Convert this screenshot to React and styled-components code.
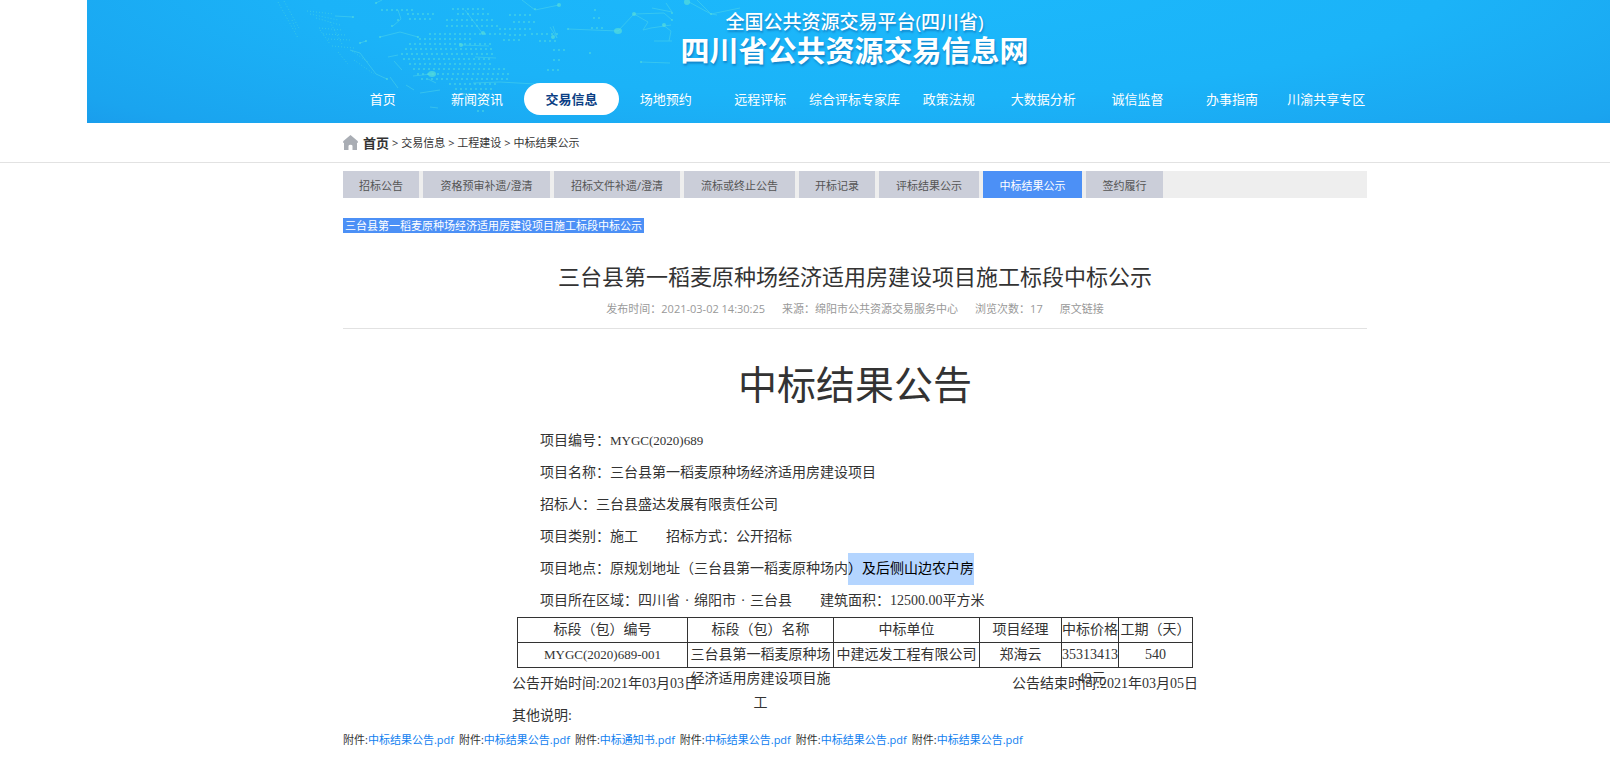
import styled, { createGlobalStyle } from "styled-components";

const menus = [
    "首页",
    "新闻资讯",
    "交易信息",
    "场地预约",
    "远程评标",
    "综合评标专家库",
    "政策法规",
    "大数据分析",
    "诚信监督",
    "办事指南",
    "川渝共享专区"
];

const tabs = [
    { name: "招标公告", width: 76 },
    { name: "资格预审补遗/澄清", width: 127 },
    { name: "招标文件补遗/澄清", width: 126 },
    { name: "流标或终止公告", width: 111 },
    { name: "开标记录", width: 76 },
    { name: "评标结果公示", width: 100 },
    { name: "中标结果公示", width: 99 },
    { name: "签约履行", width: 77 }
];

const columns = [
    { name: "标段（包）编号", width: 170, value: "MYGC(2020)689-001", code: true },
    { name: "标段（包）名称", width: 146, value: "三台县第一稻麦原种场经济适用房建设项目施工" },
    { name: "中标单位", width: 146, value: "中建远发工程有限公司" },
    { name: "项目经理", width: 82, value: "郑海云" },
    { name: "中标价格", width: 57, value: "35313413\n.49元" },
    { name: "工期（天）", width: 74, value: "540" }
];

const files = [
    "中标结果公告.pdf",
    "中标结果公告.pdf",
    "中标通知书.pdf",
    "中标结果公告.pdf",
    "中标结果公告.pdf",
    "中标结果公告.pdf"
];

// [y, first x, last x] of each row of dots on the globe
const dotRows = [
    [10, 112, 145], [14, 138, 165], [9, 183, 215], [14, 188, 220], [19, 140, 164], [20, 177, 225],
    [26, 177, 230], [29, 230, 262], [34, 160, 240], [39, 150, 205], [44, 140, 225], [49, 136, 222],
    [54, 132, 226], [59, 134, 224], [64, 140, 224], [69, 144, 236], [74, 148, 240], [79, 152, 238],
    [84, 180, 230], [89, 186, 226], [94, 194, 222], [99, 198, 220], [104, 200, 218], [111, 208, 216],
    [15, 240, 262], [22, 244, 268], [35, 240, 256], [40, 234, 252], [10, 325, 330], [18, 324, 332],
    [28, 322, 335], [34, 262, 290], [41, 270, 288], [50, 284, 296], [60, 284, 294], [70, 278, 292]
]

const lines = [
    "M65 16L83 17", "M123 26L131 19L128 10", "M110 37L130 32L148 37", "M195 10L213 34", "M106 3L112 0",
    "M191 45L219 46", "M118 57L128 55", "M124 61L132 70", "M143 76L162 74", "M252 0L265 10L289 5",
    "M298 29L348 31L364 14L394 13L402 20", "M364 14L378 22L373 30L381 28L401 25",
    "M393 25L401 31L399 41", "M384 41L402 41", "M371 62L400 63", "M419 2L441 14L470 8", "M427 0L441 14L447 15",
    "M280 27L287 38L283 26", "M382 8L402 12L396 3", "M90 43L96 41", "M80 50L90 53L106 74L117 79",
    "M203 83L230 82L265 84", "M150 93L170 90", "M120 77L128 88", "M205 57L226 58", "M160 107L168 108",
    "M136 85L144 90", "M158 79L166 83"
];

const nodes = [
    [83, 17, 1], [128, 20, 1], [110, 37, 1], [148, 37, 1], [213, 33, 2], [191, 45, 2], [162, 74, 4],
    [289, 5, 2], [265, 9, 1], [298, 29, 1], [348, 31, 4], [364, 14, 2], [394, 25, 2], [402, 20, 1],
    [417, 2, 3], [441, 14, 1], [320, 53, 1], [96, 41, 1], [283, 37, 2], [402, 13, 1], [106, 3, 1],
    [371, 62, 1], [90, 43, 1], [117, 79, 1], [122, 26, 1]
];

// faint dotted coast on the globe's left edge
const coast = [
    "M8 2L28 38", "M14 1L30 30", "M22 20L26 30", "M37 11L64 14", "M40 14L68 20", "M46 18L70 25",
    "M49 28L72 30", "M53 34L76 35", "M58 39L80 40", "M60 22L72 44", "M50 30L60 44", "M62 46L84 48",
    "M68 52L78 64", "M82 51L98 62", "M84 60L104 74"
];

function Globe() {
    return (
        <GlobeSvg viewBox="0 0 530 123" aria-hidden="true">
            <g fill="none" stroke="#52dbe0" strokeWidth="2" strokeLinecap="round" strokeDasharray="0 5" opacity="0.7">
                {dotRows.map(([y, from, to]) => (
                    <path key={`${y}-${from}`} d={`M${from} ${y}H${to}`} />
                ))}
            </g>
            <g fill="none" stroke="#52dbe0" strokeDasharray="1 2" opacity="0.5">
                {coast.map(d => <path key={d} d={d} />)}
            </g>
            <g fill="none" stroke="#5fe0e6" opacity="0.4">
                {lines.map(d => <path key={d} d={d} />)}
            </g>
            <g fill="#5be0d8" opacity="0.65">
                {nodes.map(([x, y, r]) => <ellipse key={`${x}-${y}`} cx={x} cy={y} rx={r} ry={r > 3 ? 3 : r} />)}
            </g>
        </GlobeSvg>
    )
}

function HomeIcon() {
    return (
        <svg width="15" height="15" viewBox="0 0 15 15" aria-hidden="true">
            <path d="M7.5 0L14.6 6Q15 6.5 15 7.5L14 8V15H9.5V11Q9.5 9.7 7.5 9.7T5.5 11V15H1V8L0 7.5Q0 6.5 0.4 6Z" fill="#a9adb4" />
        </svg>
    )
}

export default function App() {
    return (
        <>
            <GlobalStyle />
            <Header>
                <Globe />
                <SiteName>
                    <p>全国公共资源交易平台(四川省)</p>
                    <h1>四川省公共资源交易信息网</h1>
                </SiteName>
                <Menu>
                    {menus.map(menu => (
                        <MenuLink key={menu} href="#" $active={menu === "交易信息"}>{menu}</MenuLink>
                    ))}
                </Menu>
            </Header>
            <BreadcrumbBar>
                <Breadcrumb>
                    <HomeIcon />
                    <a className="home" href="#">首页</a>
                    <span>&gt; <a href="#">交易信息</a></span>
                    <span>&gt; <a href="#">工程建设</a></span>
                    <span>&gt; <a href="#">中标结果公示</a></span>
                </Breadcrumb>
            </BreadcrumbBar>
            <Page>
                <Container>
                    <Tabs>
                        {tabs.map(tab => (
                            <Tab key={tab.name} $width={tab.width} $active={tab.name === "中标结果公示"}>{tab.name}</Tab>
                        ))}
                    </Tabs>
                    <Section><a href="#">三台县第一稻麦原种场经济适用房建设项目施工标段中标公示</a></Section>
                    <ArticleHead>
                        <h2>三台县第一稻麦原种场经济适用房建设项目施工标段中标公示</h2>
                        <Meta>
                            <span>发布时间：2021-03-02 14:30:25</span>
                            <span>来源：绵阳市公共资源交易服务中心</span>
                            <span>浏览次数：17</span>
                            <a href="#">原文链接</a>
                        </Meta>
                    </ArticleHead>
                    <Notice>
                        <h3>中标结果公告</h3>
                        <Line>项目编号：<Code>MYGC(2020)689</Code></Line>
                        <Line>项目名称：三台县第一稻麦原种场经济适用房建设项目</Line>
                        <Line>招标人：三台县盛达发展有限责任公司</Line>
                        <Line>项目类别：施工<Second>招标方式：公开招标</Second></Line>
                        <Line>项目地点：原规划地址（三台县第一稻麦原种场内<Marked>）及后侧山边农户房</Marked></Line>
                        <Line>
                            项目所在区域：四川省<Dot>·</Dot>绵阳市<Dot>·</Dot>三台县
                            <Second>建筑面积：12500.00平方米</Second>
                        </Line>
                        <Result>
                            <colgroup>
                                {columns.map(column => <Col key={column.name} $width={column.width} />)}
                            </colgroup>
                            <thead>
                                <tr>{columns.map(column => <th key={column.name}><Cell>{column.name}</Cell></th>)}</tr>
                            </thead>
                            <tbody>
                                <tr>
                                    {columns.map(column => (
                                        <td key={column.name}>
                                            <Cell>{column.code ? <Code>{column.value}</Code> : column.value}</Cell>
                                        </td>
                                    ))}
                                </tr>
                            </tbody>
                        </Result>
                        <Dates>
                            <span>公告开始时间:2021年03月03日</span>
                            <span>公告结束时间:2021年03月05日</span>
                        </Dates>
                        <Dates>其他说明:</Dates>
                    </Notice>
                    <Files>
                        {files.map((file, index) => (
                            <span key={index}>附件:<a href="#">{file}</a></span>
                        ))}
                    </Files>
                </Container>
            </Page>
        </>
    )
}

const GlobalStyle = createGlobalStyle`
    * {
        box-sizing: border-box;
    }

    body {
        margin: 0;
        background: #ffffff;
        color: #333333;
        font-family: "Open Sans", "Noto Sans CJK SC", sans-serif;
        font-size: 11px;
        line-height: 16px;
    }

    h1, h2, h3, p {
        margin: 0;
        font-weight: 400;
    }

    a {
        color: inherit;
        text-decoration: none;
    }
`

const Header = styled.header`
    position: relative;
    margin-left: 87px;
    padding: 11px 0 8px 12px;
    background: radial-gradient(ellipse 75% 190% at 52% -15%, #1cb9fc 0%, #1bb3f8 50%, #1aa4ef 85%, #1996e9 100%);
    overflow: hidden;
`

const GlobeSvg = styled.svg`
    position: absolute;
    top: 0;
    left: 183px;
    width: 530px;
    height: 123px;
`

const SiteName = styled.div`
    position: relative;
    color: #ffffff;
    text-align: center;
    text-shadow: 1px 2px 2px rgba(10, 90, 160, 0.5);

    p {
        font-size: 19px;
        font-weight: 500;
        line-height: 22px;
    }

    h1 {
        font-size: 29px;
        font-weight: 700;
        line-height: 36px;
    }
`

const Menu = styled.nav`
    position: relative;
    display: grid;
    grid-template-columns: repeat(11, 1fr);
    max-width: 1038px;
    margin: 14px auto 0;
`

const MenuLink = styled.a`
    display: flex;
    align-items: center;
    justify-content: center;
    height: 32px;
    border-radius: 16px;
    font-size: 13px;
    white-space: nowrap;
    font-weight: ${props => props.$active ? 700 : 400};
    color: ${props => props.$active ? "#0c3f85" : "#ffffff"};
    background: ${props => props.$active ? "#ffffff" : "transparent"};
`

const Container = styled.div`
    max-width: 1024px;
    margin: 0 auto;
`

const BreadcrumbBar = styled.div`
    padding-left: 100px;
    border-bottom: 1px solid #e2e2e2;
`

const Breadcrumb = styled(Container)`
    display: flex;
    align-items: center;
    gap: 3px;
    height: 39px;

    .home {
        margin-left: 2px;
        font-size: 13px;
        font-weight: 700;
    }
`

const Page = styled.main`
    padding-left: 100px;
`

const Tabs = styled.div`
    display: flex;
    gap: 4px;
    margin-top: 8px;
    background: #eeeeee;
`

const Tab = styled.button`
    width: ${props => props.$width}px;
    height: 27px;
    padding: 0;
    border: none;
    font-family: inherit;
    font-size: 11px;
    white-space: nowrap;
    color: ${props => props.$active ? "#ffffff" : "#555555"};
    background: ${props => props.$active ? "#4c90f6" : "#cbced9"};
    cursor: pointer;
`

const Section = styled.div`
    display: flex;
    margin-top: 20px;

    a {
        padding: 0 2px;
        line-height: 15px;
        color: #ffffff;
        background: #4c90f6;
    }
`

const ArticleHead = styled.div`
    margin-top: 28px;
    padding-bottom: 9px;
    border-bottom: 1px solid #e2e2e2;
    text-align: center;

    h2 {
        font-size: 22px;
        line-height: 30px;
    }
`

const Meta = styled.div`
    display: flex;
    justify-content: center;
    gap: 17px;
    margin-top: 8px;
    line-height: 20px;
    color: #999999;
`

const Notice = styled.article`
    max-width: 686px;
    margin: 0 auto;
    font-family: "Liberation Serif", "Noto Sans CJK SC", serif;
    font-size: 14px;
    line-height: 32px;

    h3 {
        margin: 27px 0 9px;
        font-size: 39px;
        line-height: 60px;
        text-align: center;
    }
`

const Line = styled.p`
    height: 32px;
    padding-left: 28px;
`

const Code = styled.span`
    font-size: 13px;
`

const Second = styled.span`
    margin-left: 28px;
`

const Marked = styled.mark`
    display: inline-block;
    height: 32px;
    color: #000000;
    background: #b4d5ff;
`

const Dot = styled.span`
    display: inline-block;
    width: 14px;
    text-align: center;
`

const Result = styled.table`
    width: 675px;
    margin: 0 auto;
    border-collapse: collapse;
    table-layout: fixed;

    th, td {
        height: 25px;
        padding: 0;
        border: 1px solid #333333;
        font-weight: 400;
        text-align: center;
        vertical-align: top;
    }
`

const Col = styled.col`
    width: ${props => props.$width}px;
`

// long values run out of the fixed row height
const Cell = styled.div`
    height: 24px;
    margin: 0 -1px;
    line-height: 24px;
    white-space: pre-line;
`

const Dates = styled.div`
    display: flex;
    justify-content: space-between;
    height: 32px;
`

const Files = styled.div`
    display: flex;
    flex-wrap: wrap;
    gap: 5px;

    a {
        color: #1080f0;
    }
`
